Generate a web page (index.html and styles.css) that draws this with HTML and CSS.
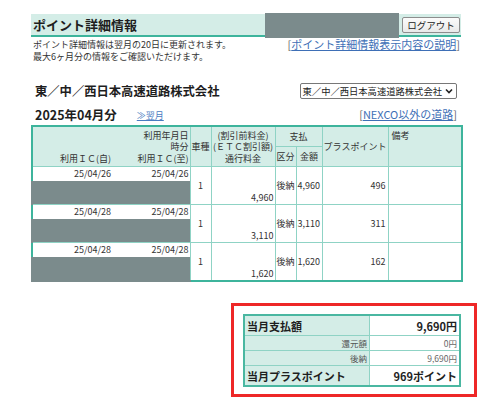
FILE: index.html
```html
<!DOCTYPE html>
<html lang="ja">
<head>
<meta charset="utf-8">
<title>ポイント詳細情報</title>
<link rel="stylesheet" href="styles.css">
</head>
<body>
<div class="page">
  <header class="topbar">
    <h1 class="title">ポイント詳細情報</h1>
    <button class="logout" type="button">ログアウト</button>
    <div class="redact-top"></div>
  </header>

  <div class="info">
    <p class="note">ポイント詳細情報は翌月の20日に更新されます。<br>最大6ヶ月分の情報をご確認いただけます。</p>
    <span class="help">[<a href="#">ポイント詳細情報表示内容の説明</a>]</span>
  </div>

  <div class="company">
    <h2 class="company-name">東／中／西日本高速道路株式会社</h2>
    <div class="select">
      <span>東／中／西日本高速道路株式会社</span>
      <svg class="chev" width="8" height="6" viewBox="0 0 8 6"><path d="M1 1.5 L4 4.5 L7 1.5" fill="none" stroke="#222" stroke-width="1.6"/></svg>
    </div>
  </div>

  <div class="month">
    <h3 class="month-title">2025年04月分</h3>
    <a class="next" href="#">≫翌月</a>
    <span class="other">[<a href="#">NEXCO以外の道路</a>]</span>
  </div>

  <table class="detail">
    <colgroup>
      <col class="c1"><col class="c2"><col class="c3"><col class="c4"><col class="c5"><col class="c6"><col class="c7"><col class="c8">
    </colgroup>
    <thead>
      <tr class="ha">
        <th rowspan="2" class="ic-from">利用ＩＣ(自)</th>
        <th rowspan="2" class="ic-to">利用年月日<br>時分<br>利用ＩＣ(至)</th>
        <th rowspan="2" class="kind-h">車種</th>
        <th rowspan="2" class="fare-h">(割引前料金)<br>(ＥＴＣ割引額)<br>通行料金</th>
        <th colspan="2" class="pay-h">支払</th>
        <th rowspan="2" class="pt-h">プラスポイント</th>
        <th rowspan="2" class="memo-h">備考</th>
      </tr>
      <tr class="hb">
        <th>区分</th><th>金額</th>
      </tr>
    </thead>
    <tbody>
      <tr class="da">
        <td class="date d1">25/04/26</td><td class="date d2">25/04/26</td>
        <td rowspan="2" class="kind">1</td>
        <td rowspan="2" class="fare">4,960</td>
        <td rowspan="2" class="pay">後納</td>
        <td rowspan="2" class="amt">4,960</td>
        <td rowspan="2" class="pt">496</td>
        <td rowspan="2" class="memo"></td>
      </tr>
      <tr class="db"><td colspan="2" class="redact"></td></tr>

      <tr class="da">
        <td class="date d1">25/04/28</td><td class="date d2">25/04/28</td>
        <td rowspan="2" class="kind">1</td>
        <td rowspan="2" class="fare">3,110</td>
        <td rowspan="2" class="pay">後納</td>
        <td rowspan="2" class="amt">3,110</td>
        <td rowspan="2" class="pt">311</td>
        <td rowspan="2" class="memo"></td>
      </tr>
      <tr class="db"><td colspan="2" class="redact"></td></tr>

      <tr class="da">
        <td class="date d1">25/04/28</td><td class="date d2">25/04/28</td>
        <td rowspan="2" class="kind">1</td>
        <td rowspan="2" class="fare">1,620</td>
        <td rowspan="2" class="pay">後納</td>
        <td rowspan="2" class="amt">1,620</td>
        <td rowspan="2" class="pt">162</td>
        <td rowspan="2" class="memo"></td>
      </tr>
      <tr class="db last"><td colspan="2" class="redact"></td></tr>
    </tbody>
  </table>

  <div class="summary-wrap">
    <div class="highlight">
      <table class="summary">
        <tr class="big"><th>当月支払額</th><td>9,690円</td></tr>
        <tr class="small"><th>還元額</th><td>0円</td></tr>
        <tr class="small"><th>後納</th><td>9,690円</td></tr>
        <tr class="big"><th>当月プラスポイント</th><td>969ポイント</td></tr>
      </table>
    </div>
  </div>
</div>
</body>
</html>
```

FILE: styles.css
```css
body {
  margin: 0;
  background: #fff;
  color: #222;
  font-family: "Noto Sans CJK JP", "Noto Sans", sans-serif;
}

.page {
  width: 430px;
  margin-left: 31px;
  padding-top: 14px;
}

/* top bar */
.topbar {
  position: relative;
  display: flex;
  align-items: center;
  justify-content: space-between;
  height: 21px;
  padding: 0 1px 0 2px;
  background: #d4ede7;
  border-bottom: 2px solid #3db49c;
}
.title {
  margin: 0;
  font-size: 13px;
  font-weight: bold;
  line-height: 21px;
  color: #1e1e1e;
}
.logout {
  width: 58px;
  height: 16px;
  padding: 0;
  font-family: "Noto Sans CJK JP", sans-serif;
  font-size: 9.5px;
  line-height: 14px;
  color: #222;
  background: linear-gradient(#fbfbfb, #e9e9e9);
  border: 1px solid #8d8d8d;
  border-radius: 2px;
}
.redact-top {
  position: absolute;
  left: 234px;
  top: -1px;
  width: 134px;
  height: 25px;
  background: #7b8b8c;
}

/* info row */
.info {
  display: flex;
  justify-content: space-between;
  align-items: flex-start;
  padding: 2px 1px 0 2px;
}
.note {
  margin: 0;
  font-size: 9px;
  line-height: 12px;
  color: #333;
}
.help {
  margin-top: -2px;
  font-size: 11px;
  line-height: 14px;
  color: #666;
}
.help a, .other a {
  color: #3e6fb6;
  text-decoration: underline;
}

/* company row */
.company {
  display: flex;
  justify-content: space-between;
  align-items: center;
  margin-top: 20px;
  padding: 0 4px 0 4px;
  height: 16px;
}
.company-name {
  margin: 0;
  font-size: 12.3px;
  font-weight: bold;
  color: #1e1e1e;
}
.select {
  display: flex;
  align-items: center;
  gap: 3px;
  height: 14px;
  padding: 0 3px 0 2px;
  font-size: 9.3px;
  line-height: 14px;
  color: #222;
  border: 1px solid #777;
  border-radius: 2px;
  background: #fff;
}

/* month row */
.month {
  display: flex;
  align-items: center;
  margin-top: 7px;
  padding: 0 4px 0 4px;
  height: 16px;
}
.month-title {
  margin: 0;
  font-size: 12.5px;
  font-weight: bold;
  color: #1e1e1e;
}
.next {
  margin-left: 20px;
  margin-top: 2px;
  font-size: 9px;
  color: #4a7cc2;
  text-decoration: underline;
}
.other {
  margin-left: auto;
  font-size: 11px;
  color: #666;
}

/* detail table */
.detail {
  margin-top: 3px;
  width: 430px;
  table-layout: fixed;
  border-collapse: collapse;
  border: 2px solid #3db49c;
  font-size: 9px;
  color: #333;
}
.c1 { width: 80px; }
.c2 { width: 78px; }
.c3 { width: 21px; }
.c4 { width: 64px; }
.c5 { width: 21px; }
.c6 { width: 26px; }
.c7 { width: 66px; }
.c8 { width: 74px; }

.detail th, .detail td {
  border: 1px solid #8fd3c5;
  padding: 0 1px;
  line-height: 11.5px;
  font-weight: normal;
  white-space: nowrap;
  overflow: hidden;
}
.detail th {
  background: #d4ede7;
}
.ha th { height: 19px; }
.hb th { height: 19px; text-align: center; }

.ic-from {
  text-align: right;
  vertical-align: bottom;
  border-right-style: hidden !important;
  padding-bottom: 2px !important;
}
.ic-to {
  text-align: right;
  vertical-align: bottom;
  padding-bottom: 2px !important;
}
.kind-h, .pt-h { text-align: center; vertical-align: middle; }
.fare-h { text-align: center; vertical-align: bottom; padding-bottom: 2px !important; }
.pay-h { text-align: center; vertical-align: middle; }
.memo-h { text-align: left; vertical-align: top; padding: 3px 3px 0 !important; }

.da td.date {
  height: 14px;
  text-align: right;
  vertical-align: middle;
  border-bottom-style: none;
  background: #fff;
}
.da td.d1 { border-right-style: hidden; }
.db td { height: 23px; }
.redact {
  background: #7b8b8c;
  border-top-style: none !important;
  border-left: 2px solid #7b8b8c !important;
}
.last .redact { border-bottom: 2px solid #7b8b8c !important; }

.kind { text-align: center; vertical-align: middle; }
.fare { text-align: right; vertical-align: bottom; padding-bottom: 1px !important; }
.pay, .amt { text-align: left; vertical-align: middle; }
.pt { text-align: right; vertical-align: middle; padding-right: 2px !important; }

/* summary */
.summary-wrap {
  display: flex;
  justify-content: flex-end;
  margin-top: 21px;
}
.highlight {
  margin-right: -16px;
  padding: 8px 13px 7px 9px;
  border: 3px solid #ee2727;
}
.summary {
  width: 218px;
  border-collapse: collapse;
  border: 2px solid #4ab7a1;
  table-layout: fixed;
}
.summary th, .summary td {
  border: 1px solid #8fd3c5;
  padding: 0 2px;
  white-space: nowrap;
}
.summary th {
  width: 120px;
  background: #d4ede7;
}
.summary td { background: #fff; text-align: right; }
.big th, .big td {
  height: 19px;
  font-size: 11px;
  font-weight: bold;
  color: #1e1e1e;
}
.big th { text-align: left; }
.small th, .small td {
  height: 14px;
  font-size: 8.5px;
  font-weight: normal;
  line-height: 10px;
  color: #555;
}
.small th { text-align: right; }
.small td { color: #666; }
```
